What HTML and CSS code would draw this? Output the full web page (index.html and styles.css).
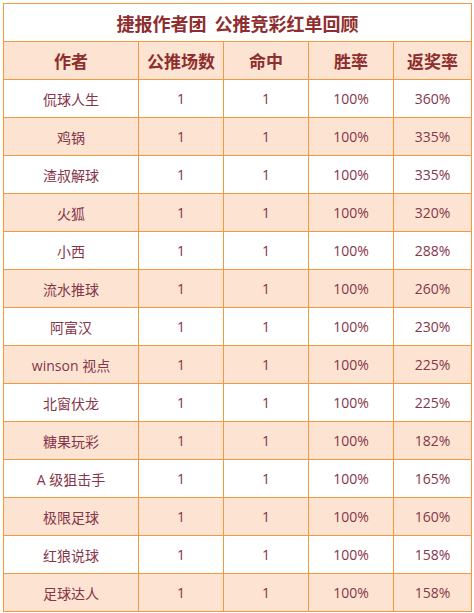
FILE: index.html
```html
<!DOCTYPE html>
<html lang="zh">
<head>
<meta charset="utf-8">
<link rel="stylesheet" href="styles.css">
</head>
<body>
<table class="report">
<colgroup>
<col class="c1"><col class="c2"><col class="c3"><col class="c4"><col class="c5">
</colgroup>
<tr class="title"><td colspan="5">捷报作者团&nbsp;&nbsp;公推竞彩红单回顾</td></tr>
<tr class="head"><th>作者</th><th>公推场数</th><th>命中</th><th>胜率</th><th>返奖率</th></tr>
<tr><td>侃球人生</td><td>1</td><td>1</td><td>100%</td><td>360%</td></tr>
<tr class="alt"><td>鸡锅</td><td>1</td><td>1</td><td>100%</td><td>335%</td></tr>
<tr><td>渣叔解球</td><td>1</td><td>1</td><td>100%</td><td>335%</td></tr>
<tr class="alt"><td>火狐</td><td>1</td><td>1</td><td>100%</td><td>320%</td></tr>
<tr><td>小西</td><td>1</td><td>1</td><td>100%</td><td>288%</td></tr>
<tr class="alt"><td>流水推球</td><td>1</td><td>1</td><td>100%</td><td>260%</td></tr>
<tr><td>阿富汉</td><td>1</td><td>1</td><td>100%</td><td>230%</td></tr>
<tr class="alt"><td>winson 视点</td><td>1</td><td>1</td><td>100%</td><td>225%</td></tr>
<tr><td>北窗伏龙</td><td>1</td><td>1</td><td>100%</td><td>225%</td></tr>
<tr class="alt"><td>糖果玩彩</td><td>1</td><td>1</td><td>100%</td><td>182%</td></tr>
<tr><td>A 级狙击手</td><td>1</td><td>1</td><td>100%</td><td>165%</td></tr>
<tr class="alt"><td>极限足球</td><td>1</td><td>1</td><td>100%</td><td>160%</td></tr>
<tr><td>红狼说球</td><td>1</td><td>1</td><td>100%</td><td>158%</td></tr>
<tr class="alt"><td>足球达人</td><td>1</td><td>1</td><td>100%</td><td>158%</td></tr>
</table>
</body>
</html>
```
FILE: styles.css
```css
html, body {
  margin: 0;
  padding: 0;
  background: #ffffff;
}
body {
  padding: 3px;
}
.report {
  border-collapse: collapse;
  table-layout: fixed;
  width: 468px;
  font-family: "Open Sans", "Noto Sans CJK SC", sans-serif;
  color: #86354a;
}
.c1 { width: 135px; }
.c2 { width: 85px; }
.c3 { width: 85px; }
.c4 { width: 85px; }
.c5 { width: 78px; }
.report td, .report th {
  border: 1px solid #f5983f;
  padding: 0;
  text-align: center;
  vertical-align: middle;
  height: 37px;
  font-size: 14px;
  font-weight: normal;
}
.report .title td {
  height: 37px;
  font-family: "Noto Sans CJK SC", sans-serif;
  font-size: 18px;
  font-weight: bold;
  color: #8e2e2e;
}
.report .head th {
  background: #fde4d2;
  font-family: "Noto Sans CJK SC", sans-serif;
  font-size: 17px;
  font-weight: bold;
  color: #8e2e2e;
}
.report tr.alt td {
  background: #fde4d2;
}
```
